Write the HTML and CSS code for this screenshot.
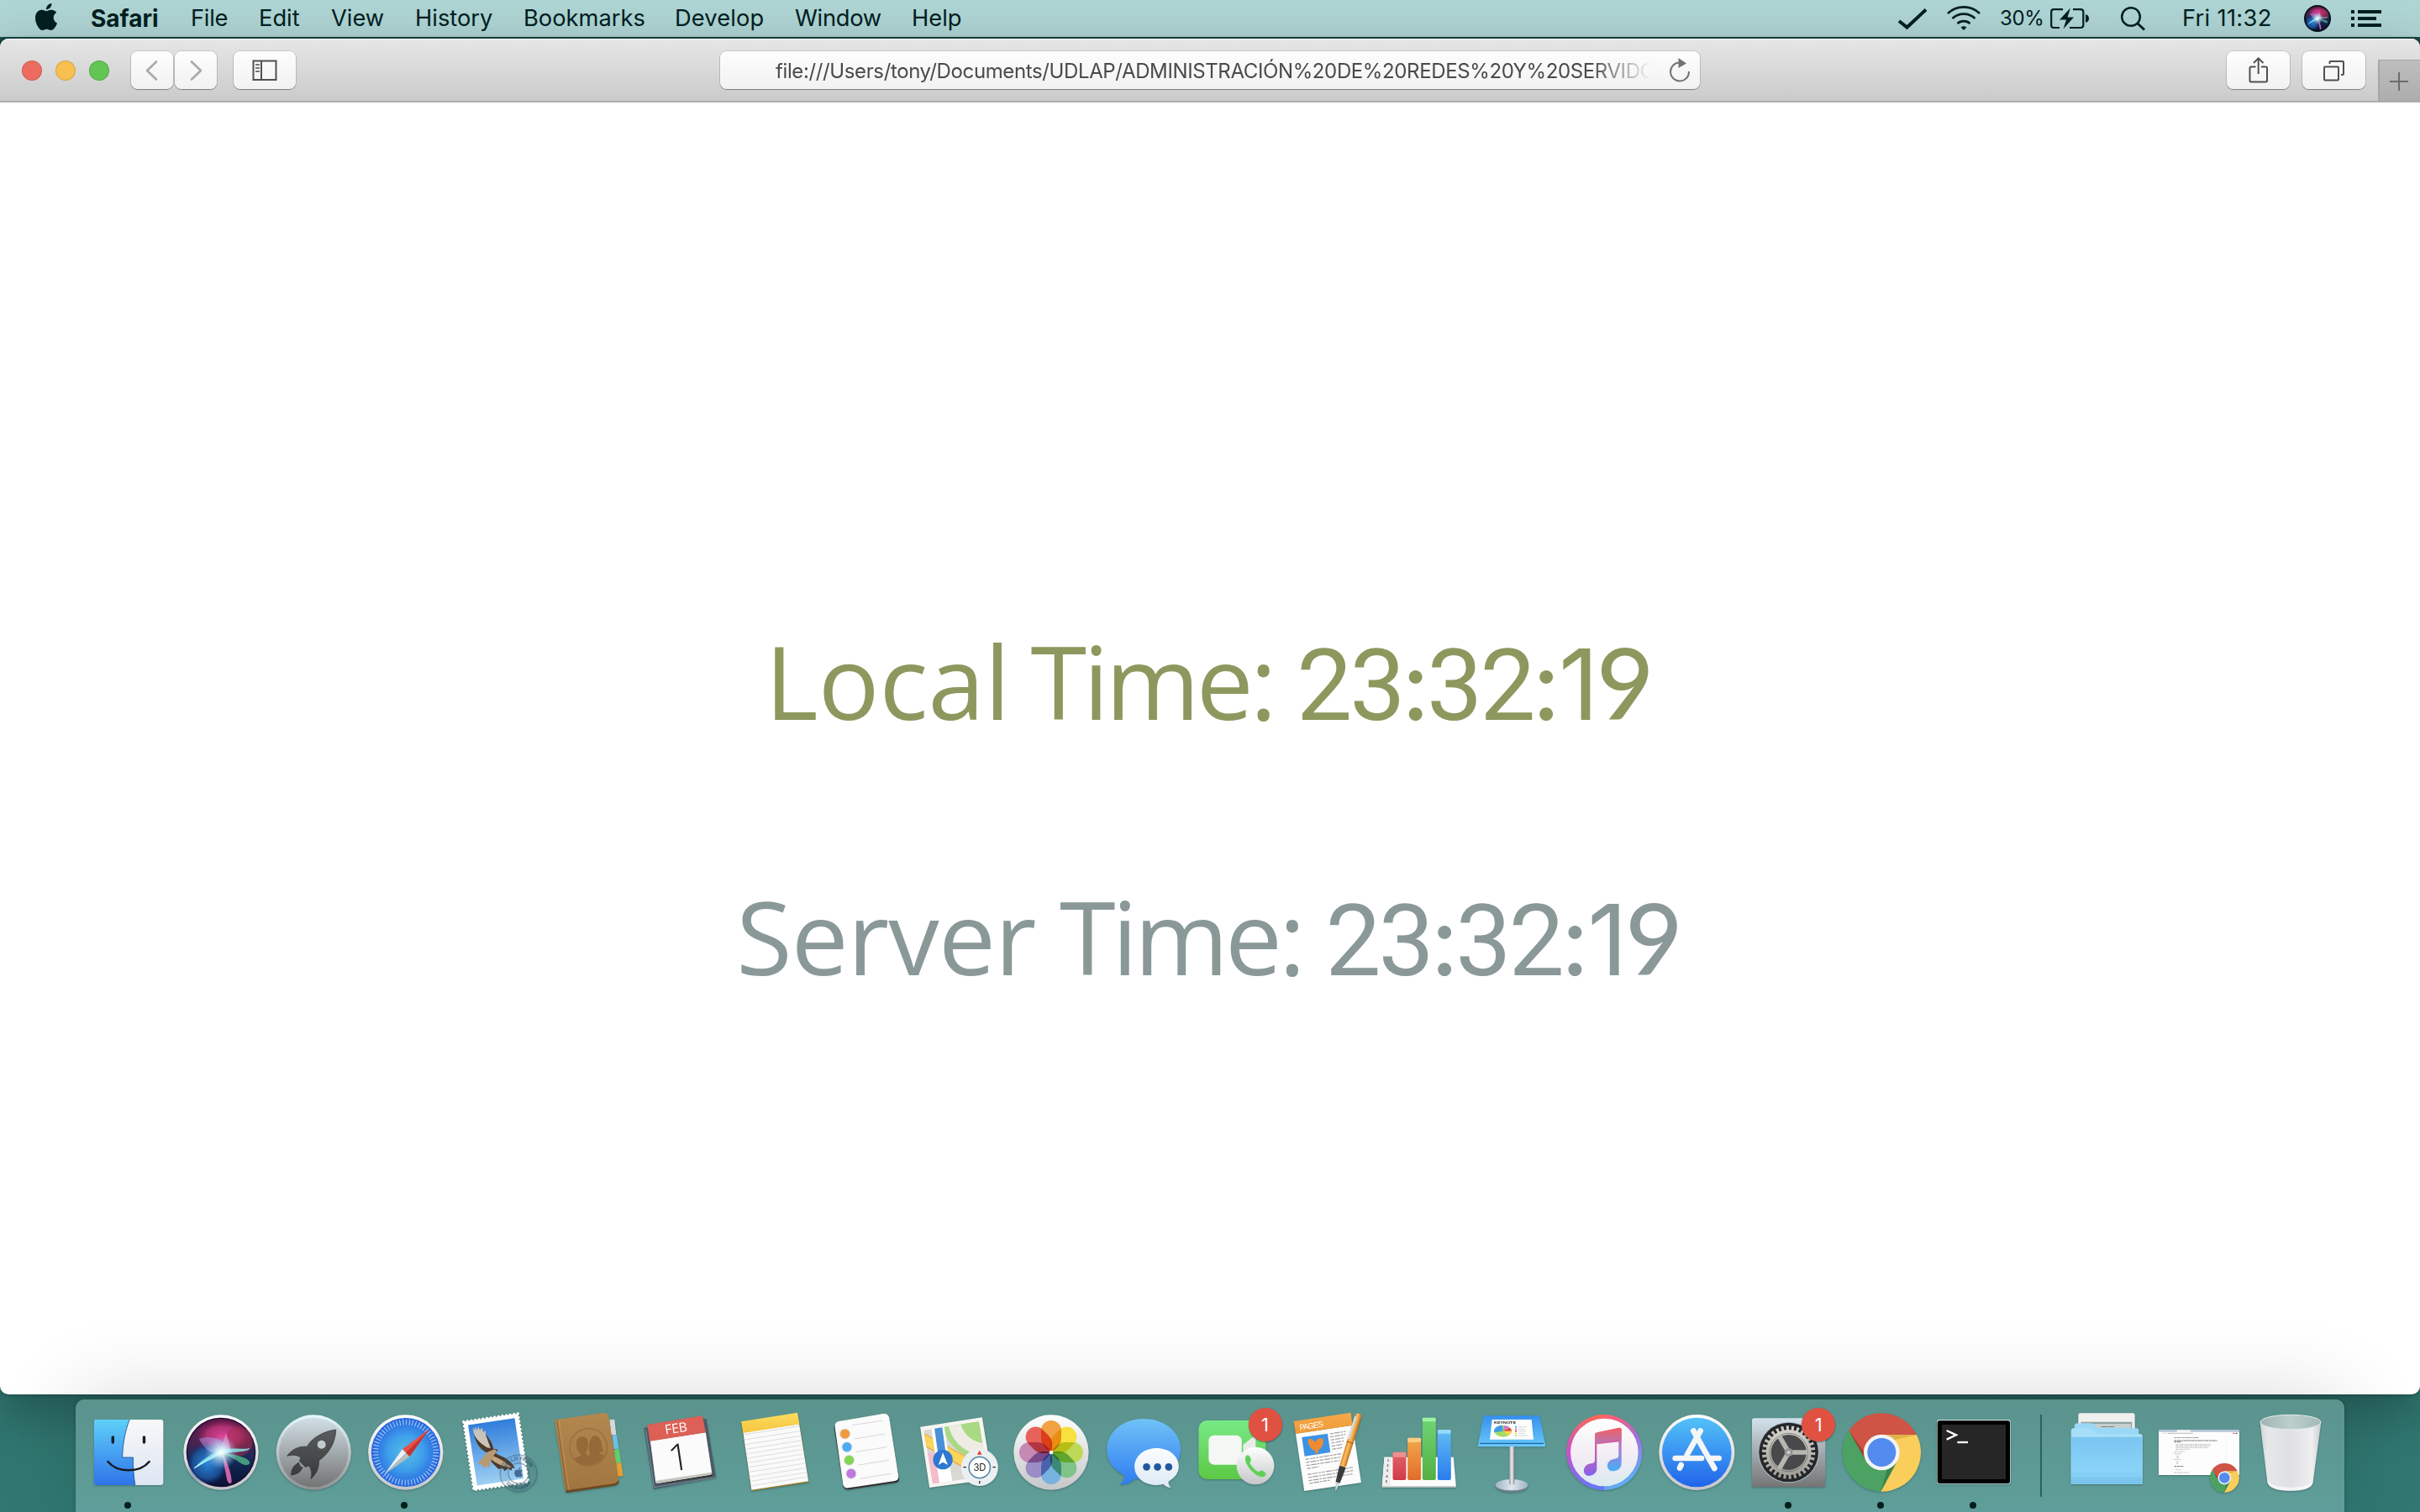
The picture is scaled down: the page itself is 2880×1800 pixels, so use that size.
FILE: index.html
```html
<!DOCTYPE html>
<html lang="en">
<head>
<meta charset="utf-8">
<title>Clock</title>
<link rel="stylesheet" href="styles.css">
</head>
<body>
<svg class="defs" aria-hidden="true">
  <defs>
    <linearGradient id="ring" x2="0" y2="1"><stop offset="0" stop-color="#fff"/><stop offset="1" stop-color="#c4c6c8"/></linearGradient>
    <linearGradient id="siriBase" x2="0" y2="1"><stop offset="0" stop-color="#5e1748"/><stop offset=".35" stop-color="#4a2350"/><stop offset=".6" stop-color="#142a58"/><stop offset="1" stop-color="#0a1236"/></linearGradient>
    <radialGradient id="siriPink" cx=".5" cy=".5" r=".5"><stop offset="0" stop-color="#e0409a"/><stop offset=".6" stop-color="#c0367c" stop-opacity=".8"/><stop offset="1" stop-color="#8b2050" stop-opacity="0"/></radialGradient>
    <radialGradient id="siriBlue" cx=".5" cy=".5" r=".5"><stop offset="0" stop-color="#2b86d8"/><stop offset=".7" stop-color="#1c5aa5" stop-opacity=".8"/><stop offset="1" stop-color="#143a80" stop-opacity="0"/></radialGradient>
    <radialGradient id="siriGlow" cx=".5" cy=".5" r=".5"><stop offset="0" stop-color="#fff"/><stop offset=".25" stop-color="#dff" stop-opacity=".85"/><stop offset="1" stop-color="#9cf" stop-opacity="0"/></radialGradient>
    <g id="siri">
      <circle r="120" fill="url(#siriBase)"/>
      <ellipse cx="8" cy="-58" rx="100" ry="60" fill="url(#siriPink)"/>
      <ellipse cx="62" cy="-38" rx="50" ry="52" fill="#a52d4c" opacity=".5"/>
      <ellipse cx="-48" cy="40" rx="74" ry="76" fill="url(#siriBlue)"/>
      <path d="M0 0C40 6 95 16 102 34C106 48 84 48 72 40C50 24 20 8 0 0" fill="#4fae86" opacity=".85"/>
      <path d="M-78-48C-30-66 20-40 40 0C10 10-20 6-40-4C-60-16-68-30-78-48" fill="#a99ae6" opacity=".5"/>
      <path d="M-4 0C4-20 10-50 18-68C28-40 34-20 34 0Z" fill="#f08fd0" opacity=".7"/>
      <path d="M4 0C22 30 38 80 38 104C36 116 26 112 22 100C16 70 8 30 4 0" fill="#ee70b8" opacity=".85"/>
      <path d="M-98 60C-70 26-30 4 0-10C40-18 80-8 104-16C98-2 60-2 30 0C-10 10-60 36-98 60" fill="#8af0f0" opacity=".8"/>
      <path d="M-96 56C-60 32-30 16 0 0" stroke="#d9ffff" stroke-width="3" fill="none"/>
      <circle r="60" fill="url(#siriGlow)"/>
    </g>
    <g id="chrome">
      <path d="M125-63A140 140 0 0 0-117-77L-55 32L0-63Z" fill="#cf5445"/>
      <path d="M-117-77A140 140 0 0 0-3 140L55 32L-55 32Z" fill="#4ba263"/>
      <path d="M-3 140A140 140 0 0 0 125-63L0-63L55 32Z" fill="#f9ce5b"/>
      <path d="M0-63H125L44-44Z" fill="#b98e2c" opacity=".4"/>
      <path d="M-117-77L-55 32L-62 0Z" fill="#7a2a20" opacity=".5"/>
      <path d="M-3 140L55 32L20 60Z" fill="#1f6a36" opacity=".5"/>
      <circle r="64" fill="#f4f4f4"/><circle r="51" fill="#548bef"/>
    </g>
    <linearGradient id="finderL" x2="0" y2="1"><stop offset="0" stop-color="#5fd0f9"/><stop offset="1" stop-color="#2f74ea"/></linearGradient>
    <linearGradient id="finderR" x2="0" y2="1"><stop offset="0" stop-color="#f8f8f8"/><stop offset="1" stop-color="#dde6f3"/></linearGradient>
    <linearGradient id="steel" x2="0" y2="1"><stop offset="0" stop-color="#d2dfe6"/><stop offset="1" stop-color="#747474"/></linearGradient>
    <linearGradient id="steelRing" x2="0" y2="1"><stop offset="0" stop-color="#e6f8fb"/><stop offset="1" stop-color="#8f9294"/></linearGradient>
    <linearGradient id="rocket" x2="0" y2="1"><stop offset="0" stop-color="#5a5c5e"/><stop offset="1" stop-color="#37393b"/></linearGradient>
    <radialGradient id="compass"><stop offset="0" stop-color="#55bfe6"/><stop offset=".5" stop-color="#3f9fea"/><stop offset="1" stop-color="#2563de"/></radialGradient>
    <linearGradient id="sky" x2="0" y2="1"><stop offset="0" stop-color="#2f7ddb"/><stop offset="1" stop-color="#9fd0f3"/></linearGradient>
    <linearGradient id="leather" x2="0" y2="1"><stop offset="0" stop-color="#b3884f"/><stop offset="1" stop-color="#a1753f"/></linearGradient>
    <linearGradient id="noteTop" x2="0" y2="1"><stop offset="0" stop-color="#fcdc63"/><stop offset="1" stop-color="#f5c63c"/></linearGradient>
    <linearGradient id="bubble" x2="0" y2="1"><stop offset="0" stop-color="#70c2f8"/><stop offset="1" stop-color="#2f7cf0"/></linearGradient>
    <linearGradient id="bubble2" x2="0" y2="1"><stop offset="0" stop-color="#fcfdfe"/><stop offset="1" stop-color="#dce9f4"/></linearGradient>
    <linearGradient id="green" x2="0" y2="1"><stop offset="0" stop-color="#78ea86"/><stop offset="1" stop-color="#5cc845"/></linearGradient>
    <linearGradient id="orange" x2="0" y2="1"><stop offset="0" stop-color="#f6a94c"/><stop offset="1" stop-color="#ef9a35"/></linearGradient>
    <linearGradient id="pen" x2="1" y2="0"><stop offset="0" stop-color="#d98124"/><stop offset=".4" stop-color="#fbc169"/><stop offset="1" stop-color="#c56f17"/></linearGradient>
    <linearGradient id="bar1" x2="0" y2="1"><stop offset="0" stop-color="#e2646c"/><stop offset="1" stop-color="#d03b47"/></linearGradient>
    <linearGradient id="bar2" x2="0" y2="1"><stop offset="0" stop-color="#f3a94a"/><stop offset="1" stop-color="#e16c2c"/></linearGradient>
    <linearGradient id="bar3" x2="0" y2="1"><stop offset="0" stop-color="#6ed575"/><stop offset="1" stop-color="#54b043"/></linearGradient>
    <linearGradient id="bar4" x2="0" y2="1"><stop offset="0" stop-color="#62bdf5"/><stop offset="1" stop-color="#2b7cec"/></linearGradient>
    <linearGradient id="podium" x2="0" y2="1"><stop offset="0" stop-color="#3690ef"/><stop offset="1" stop-color="#68c8f8"/></linearGradient>
    <linearGradient id="pole" x2="1" y2="0"><stop offset="0" stop-color="#8b9196"/><stop offset=".5" stop-color="#f2f2f2"/><stop offset="1" stop-color="#7e858a"/></linearGradient>
    <linearGradient id="base" x2="1" y2="0"><stop offset="0" stop-color="#9fb2c2"/><stop offset=".5" stop-color="#dfe7ee"/><stop offset="1" stop-color="#9fb2c2"/></linearGradient>
    <linearGradient id="tunesRing" x1=".2" x2=".8" y2="1"><stop offset="0" stop-color="#fb6d57"/><stop offset=".25" stop-color="#ee5f83"/><stop offset=".55" stop-color="#a070e0"/><stop offset="1" stop-color="#4fbcf8"/></linearGradient>
    <linearGradient id="tunesLeft" x2="0" y2="1"><stop offset="0" stop-color="#fa6a55"/><stop offset=".5" stop-color="#c94fd0"/><stop offset="1" stop-color="#5f7bf8"/></linearGradient>
    <linearGradient id="tunesFill" x2="0" y2="1"><stop offset="0" stop-color="#fff"/><stop offset=".6" stop-color="#f1ebf3"/><stop offset="1" stop-color="#d9ecf0"/></linearGradient>
    <linearGradient id="noteFill" x1="0" x2=".3" y2="1"><stop offset="0" stop-color="#f9645b"/><stop offset=".3" stop-color="#ea5f8c"/><stop offset="1" stop-color="#7f62f5"/></linearGradient>
    <linearGradient id="noteFill2" x2="0" y2="1"><stop offset="0" stop-color="#f0605f"/><stop offset=".5" stop-color="#a77cd6"/><stop offset="1" stop-color="#45aef8"/></linearGradient>
    <linearGradient id="store" x2="0" y2="1"><stop offset="0" stop-color="#53c2f8"/><stop offset="1" stop-color="#2064ea"/></linearGradient>
    <linearGradient id="prefs" x2="0" y2="1"><stop offset="0" stop-color="#d3e3eb"/><stop offset=".5" stop-color="#a3a9ad"/><stop offset="1" stop-color="#757575"/></linearGradient>
    <linearGradient id="gear" x2="0" y2="1"><stop offset="0" stop-color="#d0cec8"/><stop offset="1" stop-color="#a3a19c"/></linearGradient>
    <linearGradient id="folder" x2="0" y2="1"><stop offset="0" stop-color="#79c6f1"/><stop offset=".7" stop-color="#8ad2f8"/><stop offset="1" stop-color="#7cc7ee"/></linearGradient>
    <linearGradient id="trash" x2="1" y2="0"><stop offset="0" stop-color="#d2d5d7"/><stop offset=".12" stop-color="#e6e7e9"/><stop offset=".5" stop-color="#dfe0e3"/><stop offset=".85" stop-color="#efeff0"/><stop offset="1" stop-color="#c8cccd"/></linearGradient>
    <linearGradient id="trashIn" x2="1" y2="0"><stop offset="0" stop-color="#9fb5b3"/><stop offset=".5" stop-color="#bccfcd"/><stop offset="1" stop-color="#a4bab8"/></linearGradient>
  </defs>
</svg>

<header class="menubar">
  <svg class="apple" width="28" height="32" viewBox="1.5 0 21 24"><path d="M12.152 6.896c-.948 0-2.415-1.078-3.96-1.04-2.04.027-3.91 1.183-4.961 3.014-2.117 3.675-.546 9.103 1.519 12.09 1.013 1.454 2.208 3.09 3.792 3.039 1.52-.065 2.09-.987 3.935-.987 1.831 0 2.35.987 3.96.948 1.637-.026 2.676-1.48 3.676-2.948 1.156-1.688 1.636-3.325 1.662-3.415-.039-.013-3.182-1.221-3.22-4.857-.026-3.04 2.48-4.494 2.597-4.559-1.429-2.09-3.623-2.324-4.39-2.376-2-.156-3.675 1.09-4.61 1.09zM15.53 3.83c.843-1.012 1.4-2.427 1.245-3.83-1.207.052-2.662.805-3.532 1.818-.78.896-1.454 2.338-1.273 3.714 1.338.104 2.715-.688 3.559-1.701"/></svg>
  <nav class="menus">
    <span class="m-app">Safari</span><span class="m-file">File</span><span class="m-edit">Edit</span><span class="m-view">View</span><span class="m-history">History</span><span class="m-bookmarks">Bookmarks</span><span class="m-develop">Develop</span><span class="m-window">Window</span><span class="m-help">Help</span>
  </nav>
  <div class="status">
    <svg width="50" height="44" viewBox="2252 0 50 44"><path d="M2260 25L2269.500 32.500L2292 11.500" class="line" stroke-width="4"/></svg>
    <svg class="s-wifi" width="50" height="44" viewBox="2312 0 50 44"><path d="M2318 16A27.500 27.500 0 0 1 2356 16M2323.500 22A19.500 19.500 0 0 1 2350.500 22M2329.500 28A11 11 0 0 1 2344.500 28" class="line" stroke-width="2.700"/><path d="M2333.500 32.500Q2337 30 2340.500 32.500L2337 36Z"/></svg>
    <span class="s-pct">30%</span>
    <svg width="56" height="44" viewBox="2436 0 56 44"><path d="M2455 11.200H2444Q2441.200 11.200 2441.200 14V30Q2441.200 33 2444 33H2451M2467 11.200H2476Q2479.300 11.200 2479.300 14V30Q2479.300 33 2476 33H2463" class="line" stroke-width="2.200"/><path d="M2464 9.500L2451 23.500H2459L2455.500 34.500L2468 20.500H2460.500Z"/><path d="M2482 17Q2486 18 2486 22T2482 27Z"/></svg>
    <svg class="s-search" width="42" height="44" viewBox="2518 0 42 44"><circle cx="2536" cy="20" r="10.800" class="line" stroke-width="2.500"/><path d="M2543.500 27.500L2552 35.500" class="line" stroke-width="3"/></svg>
    <span class="s-time">Fri 11:32</span>
    <svg width="36" height="44" viewBox="0 0 36 44"><circle cx="18" cy="22" r="16" fill="#06101c"/><g transform="translate(18 22) scale(.118)"><use href="#siri"/></g></svg>
    <svg class="s-list" width="46" height="44" viewBox="2794 0 46 44"><path d="M2798 12h4v4h-4zM2806 12h28v4h-28zM2798 20h4v4h-4zM2806 20h22v4h-22zM2798 28h4v4h-4zM2806 28h28v4h-28z"/></svg>
  </div>
</header>

<main class="window">
  <div class="toolbar">
    <div class="lights"><i class="red"></i><i class="yellow"></i><i class="green"></i></div>
    <div class="btn b-nav"><svg width="50" height="46" viewBox="0 0 50 46"><path d="M30 12.500L19 23L30 33.500" class="chev"/></svg></div>
    <div class="btn b-nav b-fwd"><svg width="50" height="46" viewBox="0 0 50 46"><path d="M20 12.500L31 23L20 33.500" class="chev"/></svg></div>
    <div class="btn b-side"><svg width="74" height="46" viewBox="0 0 74 46"><path d="M23.500 11.500h27v22.500h-27zM33 11.500v22.500" class="ico"/><path d="M26 16h5M26 20h5M26 24h5" class="ico thin"/></svg></div>
    <div class="url"><span>file:///Users/tony/Documents/UDLAP/ADMINISTRACIÓN%20DE%20REDES%20Y%20SERVIDO</span>
      <svg width="34" height="46" viewBox="1982 61 34 46"><path d="M1998 74.500A11 11 0 1 0 2010 85" fill="none" stroke="#737373" stroke-width="2"/><path d="M1997.500 69L2007 75.500L1997.500 81Z" fill="#737373"/></svg></div>
    <div class="btn b-share"><svg width="75" height="46" viewBox="2649.500 61 75 46"><path d="M2684 79.500H2678.500Q2677 79.500 2677 81V96Q2677 97.500 2678.500 97.500H2696Q2697.500 97.500 2697.500 96V81Q2697.500 79.500 2696 79.500H2690.500M2687.200 88V70M2681.500 75L2687.200 69.300L2693 75" class="ico"/></svg></div>
    <div class="btn b-tabs"><svg width="75" height="46" viewBox="2739.500 61 75 46"><path d="M2766.500 79.500h15q1 0 1 1v14q0 1-1 1h-15q-1 0-1-1v-14q0-1 1-1zM2772 76v-2q0-1 1-1h14.500q1 0 1 1v14q0 1-1 1h-2" class="ico"/></svg></div>
    <div class="newtab"><svg width="50" height="49" viewBox="0 0 50 49"><path d="M14 26h22M25 15v22" stroke="#6c6c6c" stroke-width="2"/></svg></div>
  </div>
  <section class="page">
    <div class="clock local"><span class="label">Local</span><span class="word">Time:</span><span class="num w23">23</span><span class="sep w1">:</span><span class="num w32">32</span><span class="sep w2">:</span><span class="one">1</span><span class="nine">9</span></div>
    <div class="clock server"><span class="label">Server</span><span class="word">Time:</span><span class="num w23">23</span><span class="sep w1">:</span><span class="num w32">32</span><span class="sep w2">:</span><span class="one">1</span><span class="nine">9</span></div>
  </section>
</main>

<footer class="dock">
  <!-- Finder -->
  <div class="app open"><svg viewBox="0 78 330 402"><rect x="42" y="150" width="247" height="234" rx="9" fill="url(#finderR)"/><g transform="translate(-294 0) scale(1.033 1)"><path d="M334 150H448C432 190 424 240 423 285H460C460 320 462 350 467 384H334Q325 384 325 375V159Q325 150 334 150Z" fill="url(#finderL)"/><path d="M448 150C432 190 424 240 423 285H460C460 320 462 350 467 384" fill="none" stroke="#20508f" stroke-width="2.500"/><path d="M390 213v18M498 213v18" stroke="#15202a" stroke-width="10" stroke-linecap="round"/><path d="M373 300C405 341 484 341 516 300" fill="none" stroke="#15181f" stroke-width="7" stroke-linecap="round"/></g></svg></div>
  <!-- Siri -->
  <div class="app"><svg viewBox="0 78 330 402"><circle cx="165" cy="267" r="134" fill="url(#ring)"/><circle cx="165" cy="267" r="124" fill="#1b0b30"/><g transform="translate(165 267)"><use href="#siri"/></g></svg></div>
  <!-- Launchpad -->
  <div class="app"><svg viewBox="0 78 330 402"><circle cx="166" cy="267" r="134" fill="url(#steelRing)"/><circle cx="166" cy="267" r="124" fill="url(#steel)"/><g transform="translate(-952.800 0) scale(1.033 1)"><path d="M1160 186C1120 190 1076 215 1060 247C1030 244 1008 256 991 280C1010 274 1026 276 1039 286C1037 290 1035 294 1034 298L1054 319C1058 318 1062 317 1067 315C1076 330 1078 344 1073 362C1092 345 1102 322 1101 296C1136 272 1158 232 1160 186ZM1032 304C1014 312 1006 328 1005 348C1024 346 1038 338 1044 320L1036 318Z" fill="url(#rocket)" stroke="#2d2f31" stroke-width="2"/></g><circle cx="194" cy="239" r="15" fill="#c4cbcf"/></svg></div>
  <!-- Safari -->
  <div class="app open"><svg viewBox="-1.500 78 330 402"><circle cx="166" cy="267" r="134" fill="url(#ring)"/><circle cx="166" cy="267" r="123" fill="url(#compass)"/><circle cx="166" cy="267" r="108" fill="none" stroke="#e3f1fb" stroke-width="20" stroke-dasharray="3 8.310" opacity=".75"/><path d="M250 184L154 256L180 282Z" fill="#e8504a"/><path d="M250 184L167 269L180 282Z" fill="#c5332d"/><path d="M90 346L154 256L167 269Z" fill="#f1f1f1"/><path d="M90 346L180 282L167 269Z" fill="#b9bdc0"/></svg></div>
  <!-- Mail -->
  <div class="app"><svg viewBox="21.600 78 330 402"><g transform="rotate(-8.500 182 265)"><rect x="83" y="142" width="196" height="246" fill="#fff" stroke="#fff" stroke-width="10" stroke-dasharray="0 14" stroke-linecap="round"/><rect x="83" y="142" width="196" height="246" fill="#fff"/><rect x="97" y="156" width="168" height="218" fill="url(#sky)"/></g><path d="M150 262C125 245 105 225 98 178L106 190L106 174L114 188L118 173L124 188L131 178L136 196L143 188L146 210C156 228 160 244 166 252Z" fill="#c9c3ba"/><path d="M150 268C125 258 110 235 102 200C112 225 135 240 150 250L162 252C158 240 150 218 144 200C156 215 170 235 172 254L186 256L188 262L180 270C200 284 225 282 250 324L240 322L236 332L226 324L212 334L206 324L190 326L166 302Z" fill="#4d3a2b"/><path d="M150 266L176 256L186 262L172 280L162 300L158 322L146 316L138 324L132 312L116 306L128 294Z" fill="#b79a74"/><path d="M170 280C195 290 215 300 238 322C210 318 190 312 166 294Z" fill="#c0a483"/><g fill="none" stroke="#3d5f70" opacity=".5"><circle cx="262" cy="342" r="66" stroke-width="4"/><circle cx="262" cy="342" r="36" stroke-width="4"/><circle cx="262" cy="342" r="51" stroke-width="26" opacity=".2"/></g><path id="arcTop" d="M214 342A48 48 0 0 1 310 342" fill="none"/><path id="arcBot" d="M208 346A54 54 0 0 0 316 346" fill="none"/><text class="stamp"><textPath href="#arcTop" startOffset="16">HELLO FROM</textPath></text><text class="stamp"><textPath href="#arcBot" startOffset="34">CALIFORNIA</textPath></text><g transform="translate(244 320) scale(1.500)" fill="#32577c" opacity=".8"><path d="M12.152 6.896c-.948 0-2.415-1.078-3.960-1.040-2.040.027-3.910 1.183-4.961 3.014-2.117 3.675-.546 9.103 1.519 12.090 1.013 1.454 2.208 3.090 3.792 3.039 1.520-.065 2.090-.987 3.935-.987 1.831 0 2.350.987 3.960.948 1.637-.026 2.676-1.480 3.676-2.948 1.156-1.688 1.636-3.325 1.662-3.415-.039-.013-3.182-1.221-3.220-4.857-.026-3.040 2.480-4.494 2.597-4.559-1.429-2.090-3.623-2.324-4.390-2.376-2-.156-3.675 1.090-4.610 1.090z"/><path d="M15.530 3.830c.843-1.012 1.400-2.427 1.245-3.830-1.207.052-2.662.805-3.532 1.818-.780.896-1.454 2.338-1.273 3.714 1.338.104 2.715-.688 3.559-1.701"/></g></svg></div>
  <!-- Contacts -->
  <div class="app"><svg viewBox="351 78 330 402"><path d="M586 151L604 149L610 205H592Z" fill="#d5d8da"/><path d="M596 206L612 204L619 254L602 256Z" fill="#6cc0ea"/><path d="M603 258L621 255L627 303L608 306Z" fill="#62cf6c"/><path d="M610 306L628 303L635 351L616 354Z" fill="#e39f33"/><path d="M396 158L430 408Q432 412 440 410L604 386Q622 382 620 368L600 360Z" fill="#6e4820"/><path d="M391 156Q390 151 396 150L562 126Q581 124 584 142L618 360Q619 374 604 378L432 403Q428 404 427 400Z" fill="url(#leather)"/><path d="M398 152L434 402" stroke="#8a6230" stroke-width="3"/><path d="M405 151L441 401" stroke="#c49a60" stroke-width="2"/><circle cx="511" cy="249" r="67" fill="none" stroke="#96703c" stroke-width="4"/><path d="M460 292C468 282 482 284 484 274C470 262 464 240 470 224C478 206 504 206 508 226C512 246 506 260 500 268C502 280 514 276 520 290L512 314Q476 314 460 292ZM518 270C506 262 512 216 530 208C552 204 558 230 560 252L566 262L548 268C550 276 564 272 567 280Q550 310 516 314C520 296 506 284 518 270Z" fill="#936a38"/></svg></div>
  <!-- Calendar -->
  <div class="app"><svg viewBox="680.400 78 330 402"><path d="M709 180L931 147L966 358L743 398Z" fill="#4a5a66"/><path d="M715 186L745 392L964 356" fill="none" stroke="#7d8b95" stroke-width="3"/><path d="M748 372L951 338L953 352L756 381Z" fill="#34302c"/><path d="M731 226L929 196L951 340Q951 346 945 347L757 378Q751 378 750 372Z" fill="#fbfbfb"/><path d="M752 368L950 338L951 346L754 378Z" fill="#c4c4c0"/><path d="M720 168L917 136L929 196L730 227Z" fill="#dc6056"/><g transform="rotate(-8.500 824 190)"><text x="824" y="197" class="feb" text-anchor="middle" textLength="80">FEB</text><text x="819" y="332" class="one-day" text-anchor="middle">1</text></g></svg></div>
  <!-- Notes -->
  <div class="app"><svg viewBox="1009.800 78 330 402"><path d="M1062 198L1263 166L1296 374L1092 405Z" fill="#977c28"/><path d="M1062 196L1262 166L1295 370L1092 401Z" fill="#fafafa"/><path d="M1055 157L1256 125L1263 166L1062 198Z" fill="url(#noteTop)"/><path d="M1064 204L1262 173" stroke="#9a9a9a" stroke-width="2" stroke-dasharray="3 3"/><path d="M1067 222L1264 191M1069 239L1267 208M1072 256L1269 225M1075 272L1272 241M1077 288L1275 257M1080 304L1277 273M1082 320L1280 289M1085 337L1282 306M1087 354L1285 323M1090 370L1287 339M1092 386L1290 355" stroke="#c9c9c9" stroke-width="1.800"/></svg></div>
  <!-- Reminders -->
  <div class="app"><svg viewBox="19.200 78 330 402"><path d="M70 182Q68 164 86 159L246 134Q262 132 266 148L301 362Q301 372 290 375L122 400Q106 402 102 388Z" fill="#2f2f31"/><path d="M72 176Q70 160 86 156L244 129Q262 127 266 143L299 352Q300 366 287 369L120 394Q104 396 101 381Z" fill="#fbfbfb"/><g stroke="#dedede" stroke-width="3"><circle cx="108" cy="201" r="18" fill="#f29a3b"/><circle cx="115" cy="248" r="18" fill="#4dabf3"/><circle cx="123" cy="295" r="18" fill="#82d653"/><circle cx="130" cy="343" r="18" fill="#bf78df"/></g><path d="M134 170L243 153M141 219L250 201M148 265L257 248M156 312L265 295M163 361L273 343" stroke="#c9c9c9" stroke-width="2.200"/></svg></div>
  <!-- Maps -->
  <div class="app"><svg viewBox="348.600 78 330 402"><path d="M376 176L597 142L633 362L409 393Z" fill="#f7f5f1"/><clipPath id="mapclip"><path d="M389 188L585 157L617 350L421 379Z"/></clipPath><g clip-path="url(#mapclip)"><path d="M370 140H640V400H370Z" fill="#d9d8d2"/><path d="M455 150H640V310L560 290Q470 250 462 180Z" fill="#a9d983"/><path d="M494 150C504 210 540 250 610 258" fill="none" stroke="#eeece5" stroke-width="44"/><path d="M530 150C540 195 565 215 600 222V150Z" fill="#a9d983"/><path d="M385 270L425 268L450 390H410Z" fill="#f2bccb"/><path d="M380 216L540 304" stroke="#e5a43b" stroke-width="40"/><path d="M380 216L540 304" stroke="#fbd45b" stroke-width="34"/><path d="M436 160L470 390" stroke="#fff" stroke-width="46"/><path d="M438 160L456 290" stroke="#4990d8" stroke-width="28"/></g><circle cx="457" cy="293" r="35" fill="#2c78d2"/><path d="M457 268L475 312L457 302L441 312Z" fill="#fff"/><circle cx="588" cy="321" r="66" fill="#eceff2"/><circle cx="588" cy="321" r="38" fill="#fff" stroke="#5f8dab" stroke-width="5"/><path d="M579 275H596L588 260Z" fill="#e8392b"/><path d="M530 320h10M635 320h10M588 369v10" stroke="#222" stroke-width="4"/><text x="588" y="333" text-anchor="middle" class="map3d">3D</text></svg></div>
  <!-- Photos -->
  <div class="app"><svg viewBox="678 78 330 402"><circle cx="843" cy="267" r="134" fill="url(#ring)"/><g class="petals" transform="translate(843 267)"><path class="p" d="M0 0Q-36-20-36-50V-78A36 36 0 0 1 36-78V-50Q36-20 0 0" fill="#f1a244"/><path class="p" transform="rotate(45)" d="M0 0Q-36-20-36-50V-78A36 36 0 0 1 36-78V-50Q36-20 0 0" fill="#f6e13d"/><path class="p" transform="rotate(90)" d="M0 0Q-36-20-36-50V-78A36 36 0 0 1 36-78V-50Q36-20 0 0" fill="#bed957"/><path class="p" transform="rotate(135)" d="M0 0Q-36-20-36-50V-78A36 36 0 0 1 36-78V-50Q36-20 0 0" fill="#7fc389"/><path class="p" transform="rotate(180)" d="M0 0Q-36-20-36-50V-78A36 36 0 0 1 36-78V-50Q36-20 0 0" fill="#78b2e1"/><path class="p" transform="rotate(225)" d="M0 0Q-36-20-36-50V-78A36 36 0 0 1 36-78V-50Q36-20 0 0" fill="#9c8cc5"/><path class="p" transform="rotate(270)" d="M0 0Q-36-20-36-50V-78A36 36 0 0 1 36-78V-50Q36-20 0 0" fill="#c689b4"/><path class="p" transform="rotate(315)" d="M0 0Q-36-20-36-50V-78A36 36 0 0 1 36-78V-50Q36-20 0 0" fill="#e7625c"/><circle r="7" fill="#fff"/></g></svg></div>
  <!-- Messages -->
  <div class="app"><svg viewBox="1007.400 78 330 402"><path d="M1173 147C1246 147 1305 194 1305 255C1305 316 1246 364 1173 364Q1158 364 1143 361Q1122 382 1087 383Q1106 368 1104 349Q1041 318 1041 255C1041 194 1100 147 1173 147Z" fill="url(#bubble)"/><path d="M1219 252C1263 252 1298 280 1298 318Q1298 350 1261 371Q1260 384 1270 393Q1252 392 1243 380Q1230 384 1219 384C1175 384 1140 356 1140 318S1175 252 1219 252Z" fill="url(#bubble2)"/><circle cx="1183" cy="319" r="13" fill="#20589d"/><circle cx="1222" cy="319" r="13" fill="#20589d"/><circle cx="1262" cy="319" r="13" fill="#20589d"/></svg></div>
  <!-- FaceTime -->
  <div class="app"><svg viewBox="46.800 78 330 402"><rect x="78" y="153" width="240" height="210" rx="30" fill="url(#green)"/><rect x="114" y="206" width="118" height="105" rx="20" fill="#f5f7f5"/><path d="M237 240L270 214Q280 208 282 220V290L237 275Z" fill="#e9ece9"/><circle cx="281" cy="315" r="67" fill="url(#ring)"/><path d="M249 278C256 274 262 282 265 292C267 300 259 302 262 308C268 318 280 330 290 336C296 339 298 330 305 332C315 336 322 344 316 350C306 360 286 352 270 336C254 320 236 292 249 278Z" fill="#5fd054"/></svg><span class="badge">1</span></div>
  <!-- Pages -->
  <div class="app"><svg viewBox="376.200 78 330 402"><path d="M427 200L630 170L661 375L458 405Z" fill="#fcfcfc"/><path d="M420 156L624 125L630 170L427 201Z" fill="url(#orange)"/><text class="pagesT" transform="rotate(-8.500 442 188)" x="442" y="188" textLength="86">PAGES</text><path d="M449 213L541 200L551 267L459 281Z" fill="#3c93e6"/><path d="M471 222C480 212 490 226 498 230C504 216 518 214 526 220C528 238 520 254 506 260L508 268L498 272L497 262C482 258 472 242 471 222Z" fill="#ee8b32"/><path d="M549 201L606 192M550 212L604 203M552 223L600 215M554 234L598 226M556 245L596 238M558 256L594 250M462 292L590 272M464 303L586 284M466 314L584 296M468 325L510 318M470 346L634 320M472 357L632 332M474 368L630 344M476 378L550 366" stroke="#a0a0a0" stroke-width="3.500" stroke-dasharray="13 3 20 3 8 3"/><g transform="rotate(17 610 265)"><rect x="599" y="122" width="24" height="200" rx="11" fill="url(#pen)"/><rect x="599" y="134" width="7" height="86" rx="3" fill="#cfe0ea"/><path d="M599 320H623L619 380H603Z" fill="#3a3b3d"/><path d="M603 380H619L612 412Z" fill="#cfd6da"/><path d="M598 230h26" stroke="#a65f12" stroke-width="3"/></g></svg></div>
  <!-- Numbers -->
  <div class="app"><svg viewBox="705.600 78 330 402"><path d="M743 284H990L999 388H735Z" fill="#fdfdfd"/><path d="M735 387H999V392H735Z" fill="#c8cdcd"/><path d="M743 284H770L766 388H735Z" fill="#eee"/><g class="rows"><text x="753" y="300">1</text><text x="751" y="318">2</text><text x="750" y="337">3</text><text x="748" y="356">4</text><text x="747" y="374">5</text></g><rect x="773" y="266" width="48" height="100" rx="6" fill="url(#bar1)"/><rect x="773" y="266" width="48" height="18" rx="5" fill="#f08f92"/><rect x="826" y="215" width="48" height="151" rx="6" fill="url(#bar2)"/><rect x="826" y="215" width="48" height="16" rx="5" fill="#fcce84"/><rect x="879" y="143" width="48" height="223" rx="6" fill="url(#bar3)"/><rect x="879" y="143" width="48" height="14" rx="5" fill="#a0f2a3"/><rect x="933" y="186" width="48" height="180" rx="6" fill="url(#bar4)"/><rect x="933" y="186" width="48" height="14" rx="5" fill="#92dafb"/></svg></div>
  <!-- Keynote -->
  <div class="app"><svg viewBox="1035 78 330 402"><ellipse cx="1197" cy="388" rx="58" ry="22" fill="#6f7f8d"/><ellipse cx="1197" cy="383" rx="58" ry="20" fill="url(#base)"/><path d="M1188 245H1207V380Q1197 386 1188 380Z" fill="url(#pole)"/><path d="M1097 136H1297L1317 240V247H1077V240Z" fill="url(#podium)"/><path d="M1084 235H1311" stroke="#1d63a8" stroke-width="4"/><path d="M1127 150H1268L1275 221H1119Z" fill="#fdfdfd"/><text x="1134" y="164" class="keyT" textLength="78" lengthAdjust="spacingAndGlyphs">KEYNOTE</text><ellipse cx="1166" cy="191" rx="31" ry="21" fill="#a1dc63"/><path d="M1166 191L1135 196A31 21 0 0 1 1164 170Z" fill="#3c9fe8"/><path d="M1168 190L1170 172A31 20 0 0 1 1190 178Z" fill="#d873d8"/><path d="M1166 191L1190 179Q1197 184 1197 191Z" fill="#e8433c"/><path d="M1166 191H1197Q1197 200 1186 207Z" fill="#f9d44b"/><path d="M1209 176h6" stroke="#3c9fe8" stroke-width="5"/><path d="M1209 184h6" stroke="#d873d8" stroke-width="5"/><path d="M1209 191h6" stroke="#e8433c" stroke-width="5"/><path d="M1209 199h6" stroke="#f9d44b" stroke-width="5"/><path d="M1209 207h6" stroke="#a1dc63" stroke-width="5"/><path d="M1220 176h30M1220 184h24M1220 191h30M1220 199h24M1220 207h34" stroke="#d6d6da" stroke-width="3"/></svg></div>
  <!-- iTunes -->
  <div class="app"><svg viewBox="0 78 330 402"><circle cx="163" cy="267" r="135" fill="url(#tunesRing)"/><path d="M163 132A135 135 0 0 0 163 402Z" fill="url(#tunesLeft)"/><circle cx="163" cy="267" r="121" fill="url(#tunesFill)"/><path d="M129 207Q129 198 138 196L216 179Q224 178 224 187V228L136 238V322C138 340 122 351 107 351C84 351 82 312 114 307Q129 305 129 296Z" fill="url(#noteFill)"/><path d="M224 187V306C224 326 206 334 193 334C168 334 166 296 196 291Q214 289 214 278V220L129 236V205Q129 198 138 196L216 179Q224 178 224 187Z" fill="url(#noteFill2)"/></svg></div>
  <!-- App Store -->
  <div class="app"><svg viewBox="0 78 330 402"><circle cx="163" cy="267" r="135" fill="url(#ring)"/><circle cx="163" cy="267" r="124" fill="url(#store)"/><g stroke="#f5f6f8" stroke-width="20" stroke-linecap="round"><path d="M151 190L226 324M176 190L128 276M107 312L102 323"/><path d="M86 288H180M208 288H242"/></g></svg></div>
  <!-- System Preferences -->
  <div class="app open"><svg viewBox="0 78 330 402"><rect x="33" y="145" width="262" height="246" rx="8" fill="url(#prefs)"/><circle cx="164" cy="267" r="109" fill="#aebfd0"/><circle cx="164" cy="267" r="106" fill="#262728"/><circle cx="164" cy="267" r="86" fill="none" stroke="url(#gear)" stroke-width="18" stroke-dasharray="9 9.010"/><circle cx="164" cy="267" r="72" fill="#48494a" stroke="url(#gear)" stroke-width="18"/><circle cx="164" cy="267" r="68" fill="none" stroke="#5e5d5a" stroke-width="2"/><path d="M164 267H232M164 267L130 208M164 267L130 326" stroke="#b8b6b1" stroke-width="17"/><circle cx="164" cy="267" r="15" fill="#9b9996"/><circle cx="164" cy="267" r="9" fill="#c4c9cc" stroke="#666" stroke-width="2"/></svg><span class="badge">1</span></div>
  <!-- Chrome -->
  <div class="app open"><svg viewBox="-1 78 330 402"><use href="#chrome" transform="translate(165 267)"/></svg></div>
  <!-- Terminal -->
  <div class="app open"><svg viewBox="0 78 330 402"><rect x="33" y="150" width="263" height="230" rx="8" fill="#c8d9da"/><rect x="35" y="154" width="259" height="224" rx="8" fill="#000"/><rect x="51" y="168" width="228" height="195" fill="#262626"/><path d="M68 189L102 205L68 221" fill="none" stroke="#fff" stroke-width="7"/><path d="M106 231h38" stroke="#fff" stroke-width="7"/></svg></div>
  <div class="divider"></div>
  <!-- Documents -->
  <div class="app"><svg viewBox="216 78 330 402"><path d="M280 134Q280 127 287 127H475Q482 127 482 134V210H280Z" fill="#f0f0ef"/><path d="M289 158H472V200H289Z" fill="#8fa3a3"/><path d="M293 165H468V200H293Z" fill="#c3d0cf"/><text x="360" y="177" class="doc">Remove Items</text><path d="M266 176Q266 163 278 163H322Q336 163 344 176Q348 181 354 181H488Q496 181 496 190V220H266Z" fill="#9ad8f7"/><path d="M254 190Q254 181 262 181H320Q333 181 340 192Q346 201 354 201H500Q509 201 509 210V381H254Z" fill="#a6def9"/><path d="M254 216Q254 212 258 212H505Q509 212 509 216V376Q509 381 503 381H260Q254 381 254 376Z" fill="url(#folder)"/><path d="M254 360h255M254 367h255M254 374h255" stroke="#66b4dd" stroke-width="1.500"/></svg></div>
  <!-- Minimized browser window -->
  <div class="app"><svg viewBox="546 78 330 402"><rect x="567" y="186" width="288" height="162" fill="#fdfdfd"/><path d="M567 186h288v8H567z" fill="#b6c5d8"/><path d="M632 187h48v8h-48z" fill="#f5f5f5"/><path d="M583 199h112" stroke="#a9a9a9" stroke-width="2.500" stroke-dasharray="5 5 3 4 90"/><path d="M832 199h6" stroke="#e2574c" stroke-width="4"/><path d="M842 199h5" stroke="#444" stroke-width="4"/><path d="M613 204V347M809 204V347" stroke="#eee" stroke-width="1.500"/><text x="622" y="216" class="mini" textLength="88" lengthAdjust="spacingAndGlyphs">NETWORKS AND SERVER MANAGEMENT</text><path d="M622 225h154M622 230h26M622 317h35" stroke="#777" stroke-width="3" stroke-dasharray="8 1.500 14 1.500"/><path d="M628 239h125M628 244h122M628 250h116M628 256h50M622 264h38M622 272h25M630 280h8M630 286h9M622 293h24M630 301h8M630 307h6M628 329h20M622 339h54" stroke="#b4b4b4" stroke-width="2.500" stroke-dasharray="9 1.500 5 1.500"/><use href="#chrome" transform="translate(802 358) scale(.373)"/></svg></div>
  <!-- Trash -->
  <div class="app"><svg viewBox="876 78 330 402"><path d="M932 160L958 372Q964 404 1041 404T1121 372L1150 160Q1130 185 1041 185T932 160Z" fill="url(#trash)"/><path d="M957 366Q975 392 1041 392T1122 366L1121 374Q1114 404 1041 404T958 374Z" fill="#fff" opacity=".6"/><ellipse cx="1041" cy="159" rx="108" ry="26" fill="url(#trashIn)" stroke="#e6ecec" stroke-width="3"/></svg></div>
</footer>
</body>
</html>
```
FILE: styles.css
```css
* { box-sizing: border-box; }

body {
  margin: 0;
  width: 2880px;
  height: 1800px;
  overflow: hidden;
  display: flex;
  flex-direction: column;
  background: linear-gradient(#1c4a4a 0, #1c4a4a 50px, #2f7770 1500px, #317872 1800px);
  font-family: Inter, "Liberation Sans", sans-serif;
}

.defs { position: absolute; width: 0; height: 0; }
svg { display: block; flex: none; }

/* Menu bar */
.menubar {
  height: 44px;
  flex: none;
  display: flex;
  align-items: center;
  background: #aed4d3;
  color: #00201f;
  fill: #00201f;
  font-size: 27.3px;
  line-height: 44px;
}
.apple { margin: 0 39px 4px 41px; }
.menus { display: flex; }
.m-app { width: 119px; font-weight: 700; font-size: 28px; }
.m-file { width: 81px; letter-spacing: -.3px; }
.m-edit { width: 86px; }
.m-view { width: 100px; }
.m-history { width: 129px; }
.m-bookmarks { width: 180px; }
.m-develop { width: 143px; letter-spacing: .1px; }
.m-window { width: 139px; letter-spacing: -.3px; }
.status { display: flex; margin-left: auto; padding-right: 40px; }
.s-wifi { margin-left: 10px; }
.s-pct { width: 56px; margin-left: 18px; font-size: 24px; letter-spacing: -.4px; }
.s-search { margin-left: 26px; }
.s-time { width: 143px; margin-left: 37px; letter-spacing: .3px; }
.s-list { margin-left: 18px; }
.line { fill: none; stroke: #00201f; }

/* Browser window */
.window {
  flex: none;
  height: 1614px;
  margin-top: 2px;
  display: flex;
  flex-direction: column;
  border-radius: 10px;
  overflow: hidden;
  background: #fff;
  box-shadow: 0 0 4px rgba(0, 0, 0, .35), 0 20px 60px rgba(0, 0, 0, .3);
}
.toolbar {
  height: 76px;
  flex: none;
  display: flex;
  align-items: flex-start;
  padding: 14px 0 0 26px;
  background: linear-gradient(#e6e6e6, #cbcbcb);
  border-top: 1px solid #f6f6f6;
  border-bottom: 2px solid #adadad;
}
.lights { display: flex; gap: 16px; margin: 11px 26px 0 0; }
.lights i { width: 24px; height: 24px; border-radius: 50%; border: 1px solid rgba(0, 0, 0, .13); }
.red { background: #ee6b60; }
.yellow { background: #f6bf4f; }
.green { background: #62c554; }
.btn, .url {
  height: 45px;
  border-radius: 8px;
  background: linear-gradient(#fdfdfd, #f2f2f2);
  box-shadow: 0 0 0 1px rgba(0, 0, 0, .12), 0 1px 1px rgba(0, 0, 0, .3);
}
.b-nav { width: 50px; }
.b-fwd { margin-left: 2px; }
.b-side { width: 74px; margin-left: 20px; }
.url {
  width: 1166px;
  margin-left: 505px;
  padding: 0 7px 0 66px;
  display: flex;
  justify-content: space-between;
}
.url span {
  width: 1050px;
  overflow: hidden;
  white-space: nowrap;
  font-size: 24px;
  letter-spacing: -.38px;
  line-height: 48px;
  color: #4a4a4a;
  -webkit-mask: linear-gradient(90deg, #000 970px, transparent 1042px);
  mask: linear-gradient(90deg, #000 970px, transparent 1042px);
}
.b-share { width: 75px; margin-left: 627px; }
.b-tabs { width: 75px; margin-left: 15px; }
.newtab {
  width: 50px;
  height: 49px;
  margin: 10px 0 0 auto;
  background: linear-gradient(#bebebe, #adadad);
  box-shadow: inset 2px 1px 0 #a6a6a6;
}
.chev { fill: none; stroke: #a9a9a9; stroke-width: 2.6; stroke-linecap: round; stroke-linejoin: round; }
.ico { fill: none; stroke: #505050; stroke-width: 2; }
.thin { stroke: #777; }

/* Clocks */
.page {
  flex: 1;
  padding-top: 613px;
  display: flex;
  flex-direction: column;
  align-items: center;
  gap: 154px;
}
.clock {
  display: flex;
  align-items: baseline;
  height: 150px;
  font: 400 121px/150px "Open Sans", "Liberation Sans", sans-serif;
  white-space: nowrap;
}
.local { color: #8d985e; }
.server { color: #8a9898; }
.local .label { width: 316px; }
.server .label { width: 384.6px; letter-spacing: -.9px; }
.word { width: 316.4px; letter-spacing: -4px; }
.num { font-family: Roboto, sans-serif; font-size: 118px; letter-spacing: -3px; }
.sep { font-family: Lato, sans-serif; font-weight: 500; font-size: 120px; }
.w23 { width: 126.6px; }
.w1 { width: 28.4px; }
.w32 { width: 127px; }
.w2 { width: 30px; }
.one { width: 45px; font-family: Inter, sans-serif; font-size: 117px; letter-spacing: -4px; }
.nine { width: 69.4px; font-family: Lato, sans-serif; font-weight: 500; font-size: 118px; }

/* Dock */
.dock {
  flex: none;
  width: 2700px;
  height: 134px;
  margin: 6px 0 0 90px;
  padding-left: 8px;
  display: flex;
  position: relative;
  border-radius: 10px 10px 0 0;
  background: linear-gradient(#5b938d, #5f9e9a);
  box-shadow: 0 0 100px rgba(0, 0, 0, .16), 0 0 4px rgba(0, 0, 0, .25);
}
.app { width: 109.8px; flex: none; position: relative; }
.app svg { width: 110px; height: 134px; filter: drop-shadow(0 1px 1px rgba(0, 0, 0, .25)); }
.open::after {
  content: "";
  position: absolute;
  left: 50px;
  bottom: 4px;
  width: 8px;
  height: 8px;
  border-radius: 50%;
  background: #00201d;
}
.badge {
  position: absolute;
  left: 70px;
  top: 10px;
  width: 40px;
  height: 40px;
  border-radius: 50%;
  background: #e05142;
  box-shadow: 0 1px 2px rgba(0, 0, 0, .4);
  color: #fff;
  font-size: 22px;
  line-height: 40px;
  text-align: center;
}
.divider { width: 2px; height: 98px; margin: 18px 22px 0 24px; background: #26655f; }

.petals { isolation: isolate; }
.p { mix-blend-mode: multiply; }
.stamp { font: 700 17px "Liberation Sans", sans-serif; fill: #2c4d66; opacity: .75; }
.feb { font: 47px "Open Sans", sans-serif; fill: #fff; }
.one-day { font: 300 134px "Open Sans", sans-serif; fill: #222; }
.map3d { font: 34px Inter, sans-serif; fill: #222; letter-spacing: -1px; }
.pagesT { font: 29px "Liberation Sans", sans-serif; fill: #fff; }
.rows { font: 700 13px "Liberation Sans", sans-serif; fill: #555; }
.keyT { font: 700 13px "Liberation Sans", sans-serif; fill: #222; }
.doc { font: 700 7px "Liberation Sans", sans-serif; fill: #333; }
.mini { font: 700 6px "Liberation Sans", sans-serif; fill: #333; }
```
